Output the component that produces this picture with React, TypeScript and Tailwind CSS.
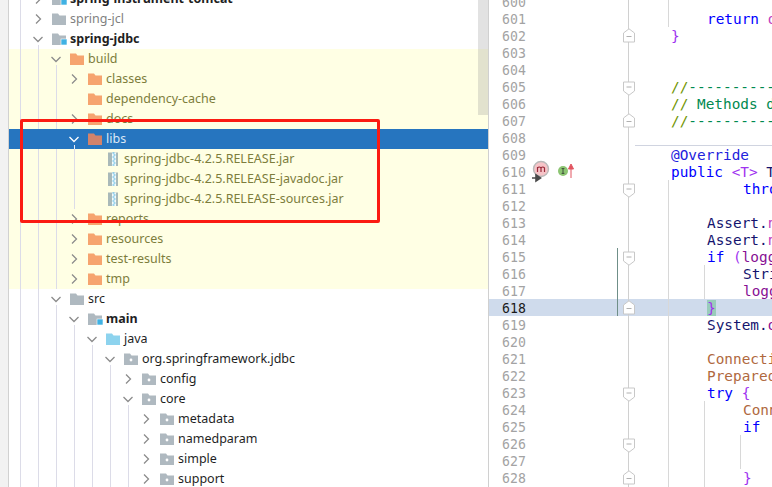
type Kind = 'module' | 'excluded' | 'plain' | 'build' | 'java' | 'pkg' | 'jar';

type TreeRow = {
  label: string;
  level: number;
  kind: Kind;
  open?: boolean;
  leaf?: boolean;
  ignored?: boolean;
  selected?: boolean;
};

const rows: TreeRow[] = [
  { label: 'spring-instrument-tomcat', level: 0, kind: 'module' },
  { label: 'spring-jcl', level: 0, kind: 'excluded' },
  { label: 'spring-jdbc', level: 0, kind: 'module', open: true },
  { label: 'build', level: 1, kind: 'build', open: true, ignored: true },
  { label: 'classes', level: 2, kind: 'build', ignored: true },
  { label: 'dependency-cache', level: 2, kind: 'build', leaf: true, ignored: true },
  { label: 'docs', level: 2, kind: 'build', ignored: true },
  { label: 'libs', level: 2, kind: 'build', open: true, ignored: true, selected: true },
  { label: 'spring-jdbc-4.2.5.RELEASE.jar', level: 3, kind: 'jar', leaf: true, ignored: true },
  { label: 'spring-jdbc-4.2.5.RELEASE-javadoc.jar', level: 3, kind: 'jar', leaf: true, ignored: true },
  { label: 'spring-jdbc-4.2.5.RELEASE-sources.jar', level: 3, kind: 'jar', leaf: true, ignored: true },
  { label: 'reports', level: 2, kind: 'build', ignored: true },
  { label: 'resources', level: 2, kind: 'build', ignored: true },
  { label: 'test-results', level: 2, kind: 'build', ignored: true },
  { label: 'tmp', level: 2, kind: 'build', ignored: true },
  { label: 'src', level: 1, kind: 'plain', open: true },
  { label: 'main', level: 2, kind: 'module', open: true },
  { label: 'java', level: 3, kind: 'java', open: true },
  { label: 'org.springframework.jdbc', level: 4, kind: 'pkg', open: true },
  { label: 'config', level: 5, kind: 'pkg' },
  { label: 'core', level: 5, kind: 'pkg', open: true },
  { label: 'metadata', level: 6, kind: 'pkg' },
  { label: 'namedparam', level: 6, kind: 'pkg' },
  { label: 'simple', level: 6, kind: 'pkg' },
  { label: 'support', level: 6, kind: 'pkg' },
];

const kw = 'text-[#0000ff]';
const brace = 'text-[#a033f0]';
const ident = 'text-[#14146e]';
const type = 'text-[#b0693f]';
const field = 'text-[#871094]';
const green = 'text-[#008a50]';
const slash = 'text-[#6f9400]';

type Seg = [string, string];
type CodeLine = { indent?: 1 | 2; segs?: Seg[]; fold?: 'up' | 'down' };

const code: Record<number, CodeLine> = {
  601: { indent: 1, segs: [['return ', kw], ['o', 'text-[#c040c0]']] },
  602: { segs: [['}', brace]], fold: 'up' },
  605: { segs: [['//', slash], ['-------------', green]], fold: 'down' },
  606: { segs: [['//', slash], [' Methods dealing', green]] },
  607: { segs: [['//', slash], ['-------------', green]], fold: 'up' },
  609: { segs: [['@Override', 'text-[#2222dd]']] },
  610: { segs: [['public ', kw], ['<T> ', brace], ['T', ident]] },
  611: { indent: 2, segs: [['thro', kw]], fold: 'down' },
  613: { indent: 1, segs: [['Assert.', ident], ['n', 'text-[#c040c0]']] },
  614: { indent: 1, segs: [['Assert.', ident], ['n', 'text-[#c040c0]']] },
  615: { indent: 1, segs: [['if ', kw], ['(', brace], ['logger', field]], fold: 'down' },
  616: { indent: 2, segs: [['Stri', ident]] },
  617: { indent: 2, segs: [['logg', field]] },
  618: { indent: 1, segs: [['}', 'bg-[#99ccbb] text-[#a033f0]']], fold: 'up' },
  619: { indent: 1, segs: [['System.', ident], ['o', 'text-[#871094]']] },
  621: { indent: 1, segs: [['Connection', type]] },
  622: { indent: 1, segs: [['Prepared', type]] },
  623: { indent: 1, segs: [['try ', kw], ['{', brace]], fold: 'down' },
  624: { indent: 2, segs: [['Conn', type]] },
  625: { indent: 2, segs: [['if', kw]] },
  626: { fold: 'down' },
  628: { indent: 2, segs: [['}', brace]], fold: 'up' },
};

const lineNumbers = Array.from({ length: 29 }, (_, i) => 600 + i);

function Chevron({ open, light }: { open?: boolean; light?: boolean }) {
  return (
    <svg width="14" height="14" viewBox="0 0 14 14" fill="none" stroke={light ? '#ffffff' : '#8c8c8c'} strokeWidth="1.3">
      <path d={open ? 'M2.5 5 L7 9.5 L11.5 5' : 'M5 2.5 L9.5 7 L5 11.5'} />
    </svg>
  );
}

function NodeIcon({ kind, selected }: { kind: Kind; selected?: boolean }) {
  if (kind === 'jar') {
    return (
      <svg width="14" height="14" viewBox="0 0 14 14" className="shrink-0">
        <rect x="2" y="0.5" width="10" height="13.5" fill="#a9b9b9" />
        <rect x="6" y="0.5" width="4" height="13.5" fill="#f4fafa" />
        <path d="M6.5 1 h2 M7.5 3 h2 M6.5 5 h2 M7.5 7 h2 M6.5 9 h2 M7.5 11 h2 M6.5 13 h2" stroke="#45aee0" strokeWidth="1.2" />
      </svg>
    );
  }
  const fill = {
    module: '#afb9c0',
    excluded: '#afb9c0',
    plain: '#afb9c0',
    pkg: '#afb9c0',
    java: '#8dd3ee',
    build: selected ? '#d1836b' : '#f6a46f',
  }[kind];
  return (
    <svg width="14" height="14" viewBox="0 0 14 14" className="shrink-0 overflow-visible">
      <path d="M0 1.5 H6 L7.5 3.5 H14 V13 H0 Z" fill={fill} />
      {kind === 'pkg' && <circle cx="7" cy="8" r="1.4" fill="#ffffff" />}
      {kind === 'module' && <rect x="9" y="7" width="6" height="6" fill="#3fb1e3" stroke="#ffffff" strokeWidth="0.6" />}
    </svg>
  );
}

function TreeItem({ row }: { row: TreeRow }) {
  const { label, level, kind, open, leaf, ignored, selected } = row;
  const bold = kind === 'module';
  const color = selected
    ? 'text-[#dbe8f6]'
    : ignored
      ? 'text-[#7d7d3c]'
      : kind === 'excluded'
        ? 'text-[#7f7f7f]'
        : 'text-[#1f1f1f]';
  const bg = selected ? 'bg-[#2675bf]' : ignored ? 'bg-[#ffffe4]' : 'bg-white';
  const weight = bold ? 'font-bold' : 'font-normal';
  // the guides of every ancestor level run behind the row, except on the selection
  const guides = selected ? [] : Array.from({ length: level + 1 }, (_, i) => i);

  return (
    <div className={`relative flex h-5 shrink-0 items-center ${bg}`}>
      {guides.map((i) => (
        <span key={i} className="absolute top-0 bottom-0 w-px bg-[#dcdce8]" style={{ left: 11 + 18 * i }} />
      ))}
      {open && (
        <span
          className={`absolute bottom-0 h-1 w-px ${selected ? 'bg-[#e8f0fa]' : 'bg-[#dcdce8]'}`}
          style={{ left: 29 + 18 * level }}
        />
      )}
      <div className="relative flex items-center" style={{ paddingLeft: 22 + 18 * level }}>
        <span className="mr-[7px] flex w-[14px] justify-center">
          {!leaf && <Chevron open={open} light={selected} />}
        </span>
        <NodeIcon kind={kind} selected={selected} />
        <span className={`ml-[4px] whitespace-nowrap pb-[1px] text-[12.5px] leading-5 ${color} ${weight}`}>{label}</span>
      </div>
    </div>
  );
}

function FoldMark({ dir }: { dir: 'up' | 'down' }) {
  return (
    <svg
      width="12"
      height="15"
      viewBox="0 0 12 15"
      className={`relative z-10 shrink-0 self-start overflow-visible ${dir === 'up' ? 'mt-[1px]' : 'mt-[3px]'}`}
    >
      <path
        d={dir === 'up' ? 'M0.5 14 V5 L6 0.8 L11.5 5 V14 Z' : 'M0.5 1 H11.5 V10 L6 14.2 L0.5 10 Z'}
        fill="#ffffff"
        stroke="#c8c8c8"
      />
      <path d={dir === 'up' ? 'M3.5 8.5 H8.5' : 'M3.5 6 H8.5'} stroke="#b0b0b0" />
    </svg>
  );
}

function EditorLine({ n }: { n: number }) {
  const line = code[n];
  const current = n === 618;
  const indent = line?.indent === 2 ? 'pl-[72px]' : line?.indent === 1 ? 'pl-[36px]' : '';
  return (
    <div className={`flex h-[17px] shrink-0 items-center ${current ? 'bg-[#cfdbec]' : ''}`}>
      <span
        className={`w-[134px] shrink-0 pl-[13px] pt-[2px] text-[13.2px] leading-[17px] ${current ? 'text-[#1a1a1a]' : 'text-[#a3a3a3]'}`}
      >
        {n}
      </span>
      <span className="flex h-[17px] w-[12px] shrink-0">{line?.fold && <FoldMark dir={line.fold} />}</span>
      <span className={`ml-[36px] whitespace-pre pt-[1px] text-[14.4px] leading-[17px] ${indent}`}>
        {line?.segs?.map(([text, cls], i) => (
          <span key={i} className={cls}>
            {text}
          </span>
        ))}
      </span>
    </div>
  );
}

function GutterIcons() {
  return (
    <svg width="44" height="26" viewBox="0 0 44 26" className="absolute left-[43px] top-[160px]">
      <circle cx="9" cy="9" r="7.5" fill="#f6c4c8" stroke="#b9b9b9" strokeWidth="1.4" />
      <path d="M5.5 12 V7 M5.5 8 Q7.2 6 9 8 V12 M9 8 Q10.8 6 12.5 8 V12" fill="none" stroke="#9a2a3a" strokeWidth="1.2" />
      <path d="M0 18 H6 M4 15 L8.5 18 L4 21 Z" fill="#4a4a4a" stroke="#4a4a4a" strokeWidth="1.6" />
      <circle cx="31" cy="11" r="5" fill="#8cc572" />
      <path d="M29.6 8.6 H32.4 M31 8.6 V13.4 M29.6 13.4 H32.4" stroke="#3f4f3a" strokeWidth="1" fill="none" />
      <path d="M39 18 V6 M36.5 9 L39 4 L41.5 9 Z" fill="#e25560" stroke="#e25560" strokeWidth="1" />
    </svg>
  );
}

// thin rules drawn over the editor text: indent guides, caret-scope bar, method separator
const editorRules = [
  'left-[179px] top-0 h-[27px] w-px bg-[#d8d8d8]',
  'left-[179px] top-[180px] bottom-0 w-px bg-[#d8d8d8]',
  'left-[215px] top-[265px] h-[34px] w-px bg-[#d8d8d8]',
  'left-[215px] top-[401px] bottom-0 w-px bg-[#d8d8d8]',
  'left-[251px] top-[435px] h-[34px] w-px bg-[#d8d8d8]',
  'left-[128px] top-[248px] h-[68px] w-px bg-[#6f8f88]',
  'left-[146px] right-0 top-[145px] h-px bg-[#d0d4e0]',
  'left-[139px] top-0 bottom-0 w-px bg-[#d0d0d0]',
];

export default function App() {
  return (
    <div className="relative flex h-[487px] w-[772px] overflow-hidden bg-white font-['Noto_Sans',sans-serif]">
      {/* left tool strip */}
      <div className="w-[9px] shrink-0 border-r border-[#d1d1d1] bg-[#f2f2f2]" />

      {/* project tree */}
      <div className="relative flex w-[479px] shrink-0 flex-col overflow-hidden">
        <div className="-mt-[11px] flex flex-col">
          {rows.map((row) => (
            <TreeItem key={row.label} row={row} />
          ))}
        </div>
        {/* scrollbar thumb */}
        <div className="absolute right-0 top-0 h-[115px] w-[10px] bg-[#8c8c8c]/25" />
      </div>

      {/* editor */}
      <div className="relative min-w-0 flex-1 overflow-hidden border-l border-[#d0d0d0] font-['DejaVu_Sans_Mono',monospace]">
        <div className="-mt-[7px] flex flex-col">
          {lineNumbers.map((n) => (
            <EditorLine key={n} n={n} />
          ))}
        </div>
        {editorRules.map((cls) => (
          <span key={cls} className={`absolute ${cls}`} />
        ))}
        <GutterIcons />
      </div>

      {/* red annotation box */}
      <div className="absolute left-[20px] top-[119px] h-[104px] w-[360px] rounded-[2px] border-[3px] border-[#fb1b12]" />
    </div>
  );
}
